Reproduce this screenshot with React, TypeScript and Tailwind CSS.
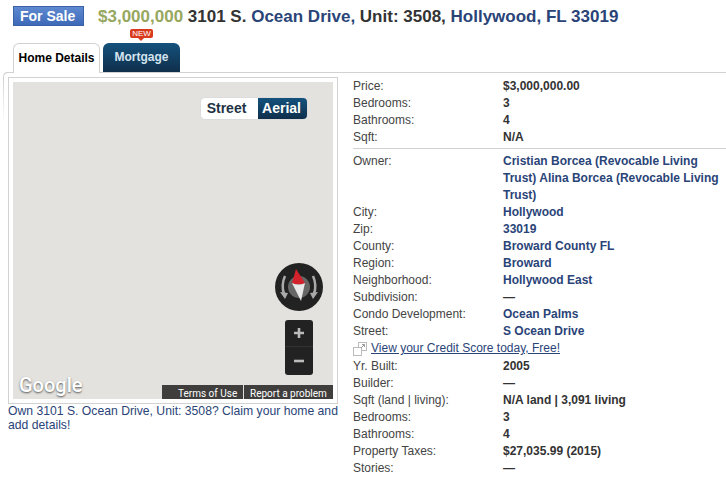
const F = "font-['Liberation_Sans',Arial,sans-serif]";

function Row({ label, value, link, h = "h-[17px]" }: { label: string; value: React.ReactNode; link?: boolean; h?: string }) {
  return (
    <div className={`flex ${h} leading-[17px]`}>
      <div className="w-[150px] shrink-0 text-[#444]">{label}</div>
      <div className={`w-[223px] font-bold ${link ? "text-[#2a4478]" : "text-[#333]"}`}>{value}</div>
    </div>
  );
}

function MapPanel() {
  return (
    <div className="relative h-[317px] w-[320px] bg-[#e3e2de] overflow-hidden">
      <div className="absolute left-[187px] top-[15px] flex h-[23px] w-[108px] rounded-[5px] border border-[#dcdcdc] bg-white overflow-hidden text-[14px] font-bold leading-[21px]">
        <div className="w-[56px] pr-[5px] text-center text-[#1f3345]">Street</div>
        <div className="flex-1 pr-[2px] text-center text-white bg-gradient-to-b from-[#14527d] to-[#0f2f4b] border-l border-white">Aerial</div>
      </div>
      <svg className="absolute left-[262px] top-[181px]" width="48" height="48" viewBox="0 0 48 48">
        <circle cx="24" cy="24" r="24" fill="#222" />
        <circle cx="24" cy="24" r="11" fill="#666" />
        <path d="M21 6 L30 20 Q24 23 17 20 Z" fill="#d3222c" />
        <path d="M17 20 Q24 23 30 20 L26 38 Z" fill="#e8e8e8" />
        <path d="M10 13 Q6 22 9 31" stroke="#aaa" strokeWidth="2.5" fill="none" />
        <path d="M38 13 Q42 22 39 31" stroke="#aaa" strokeWidth="2.5" fill="none" />
        <path d="M5 29 L13 30 L10 36 Z M43 29 L35 30 L38 36 Z" fill="#aaa" />
      </svg>
      <div className="absolute left-[272px] top-[238px] flex h-[55px] w-[28px] flex-col rounded-[3px] bg-[#222]">
        <div className="flex h-[27px] items-center justify-center border-b border-[#333]">
          <svg width="12" height="12" viewBox="0 0 12 12"><path d="M1 6H11M6 1V11" stroke="#bbb" strokeWidth="2.6" /></svg>
        </div>
        <div className="flex flex-1 items-center justify-center">
          <svg width="12" height="12" viewBox="0 0 12 12"><path d="M1 6H11" stroke="#bbb" strokeWidth="2.6" /></svg>
        </div>
      </div>
      <div className="absolute left-[6px] bottom-[2px] text-[20px] leading-[24px] text-white font-['Roboto',sans-serif] font-medium [text-shadow:0_1px_2px_#555]">Google</div>
      <div className="absolute right-0 bottom-0 flex h-[14px] w-[171px] bg-[#3f3e3c] text-[10px] leading-[18px] text-white font-['Roboto',sans-serif]">
        <div className="w-[82px] border-r border-[#ddd] pl-[16px]">Terms of Use</div>
        <div className="flex-1 pl-[6px]">Report a problem</div>
      </div>
    </div>
  );
}

export default function App() {
  return (
    <div className={`${F} h-[498px] w-[726px] overflow-hidden bg-white text-[12px]`}>
      <div className="flex h-[26px] items-start pl-[13px] pt-[6px]">
        <div className="h-[20px] w-[71px] border border-[#3b62a8] bg-gradient-to-b from-[#5f8ad0] to-[#3e69b8] pl-[6px] text-[14px] font-bold leading-[18px] text-white">For Sale</div>
        <div className="ml-[14px] whitespace-nowrap text-[17px] font-bold leading-[21px] text-[#333]">
          <span className="text-[#97a75f]">$3,000,000</span> 3101 S. <span className="text-[#2a4478]">Ocean Drive,</span> Unit: 3508, <span className="text-[#2a4478]">Hollywood, FL 33019</span>
        </div>
      </div>

      <div className="flex h-[46px] items-end pl-[13px]">
        <div className="relative z-10 -mb-px h-[30px] w-[87px] rounded-t-[6px] border border-b-0 border-[#d2d2d2] bg-white text-center font-bold leading-[28px] text-black">Home Details</div>
        <div className="relative ml-[3px] h-[29px] w-[77px] rounded-t-[6px] bg-gradient-to-b from-[#14527d] to-[#0f2f4b] text-center font-bold leading-[28px] text-[#d5e4f0]">
          Mortgage
          <div className="absolute left-[27px] -top-[14px] h-[9px] w-[23px] rounded-[2px] bg-[#d93a1e] text-center text-[8px] font-normal leading-[9px] text-white">NEW</div>
          <div className="absolute left-[35px] -top-[5px] h-0 w-0 border-x-[3px] border-t-[3px] border-x-transparent border-t-[#d93a1e]" />
        </div>
      </div>

      <div className="relative ml-[3px] flex rounded-tl-[5px] border-t border-[#d2d2d2]">
        <div className="absolute -top-px left-0 h-[6px] w-[6px] rounded-tl-[5px] border-l border-t border-[#d2d2d2]" />
        <div className="absolute left-0 top-[5px] h-[45px] w-px bg-gradient-to-b from-[#d2d2d2] to-white" />
        <div className="ml-[5px] mt-[4px] w-[330px]">
          <div className="h-[327px] w-[330px] border border-[#d2d2d2] p-[4px]">
            <MapPanel />
          </div>
          <div className="w-[333px] text-[12.2px] leading-[14px] text-[#2a4478]">
            Own 3101 S. Ocean Drive, Unit: 3508? Claim your home and add details!
          </div>
        </div>

        <div className="ml-[15px] pt-[5px]">
          <Row label="Price:" value="$3,000,000.00" />
          <Row label="Bedrooms:" value="3" />
          <Row label="Bathrooms:" value="4" />
          <Row label="Sqft:" value="N/A" />
          <div className="mb-[4px] mt-[2px] border-t border-[#d2d2d2]" />
          <Row label="Owner:" value="Cristian Borcea (Revocable Living Trust) Alina Borcea (Revocable Living Trust)" link h="h-[51px]" />
          <Row label="City:" value="Hollywood" link />
          <Row label="Zip:" value="33019" link />
          <Row label="County:" value="Broward County FL" link />
          <Row label="Region:" value="Broward" link />
          <Row label="Neighborhood:" value="Hollywood East" link />
          <Row label="Subdivision:" value="—" />
          <Row label="Condo Development:" value="Ocean Palms" link />
          <Row label="Street:" value="S Ocean Drive" link />
          <div className="flex h-[18px] items-start leading-[17px]">
            <svg width="14" height="14" viewBox="0 0 14 14" className="mr-[4px] mt-[2px]" fill="none" stroke="#bbb">
              <rect x="5.5" y="0.5" width="8" height="8" fill="#fff" />
              <rect x="0.5" y="5.5" width="8" height="8" fill="#fff" />
              <path d="M8 6L11 3M9 2.5H11.5V5" stroke="#999" />
            </svg>
            <span className="text-[#2a4478] underline">View your Credit Score today, Free!</span>
          </div>
          <Row label="Yr. Built:" value="2005" />
          <Row label="Builder:" value="—" />
          <Row label="Sqft (land | living):" value="N/A land | 3,091 living" />
          <Row label="Bedrooms:" value="3" />
          <Row label="Bathrooms:" value="4" />
          <Row label="Property Taxes:" value="$27,035.99 (2015)" />
          <Row label="Stories:" value="—" />
        </div>
      </div>
    </div>
  );
}
